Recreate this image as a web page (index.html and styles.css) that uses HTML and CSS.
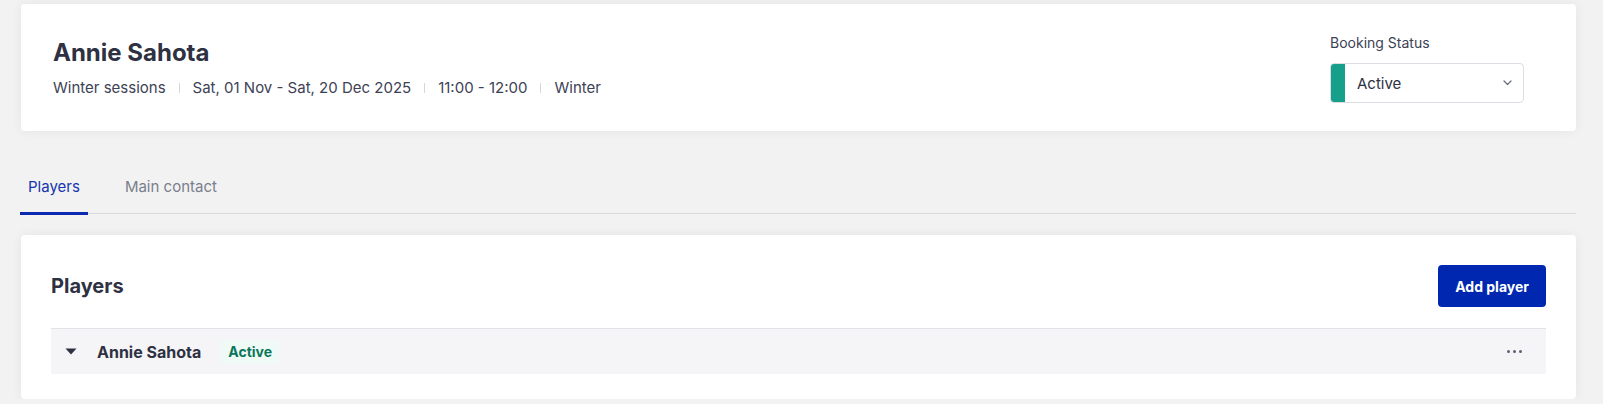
FILE: index.html
```html
<!DOCTYPE html>
<html lang="en">
<head>
<meta charset="utf-8">
<title>Booking</title>
<link rel="stylesheet" href="styles.css">
</head>
<body>
<div class="page">
  <section class="card header-card">
    <div class="header-info">
      <h1 class="title">Annie Sahota</h1>
      <div class="meta">
        <span class="meta-item">Winter sessions</span>
        <span class="sep"></span>
        <span class="meta-item">Sat, 01 Nov - Sat, 20 Dec 2025</span>
        <span class="sep"></span>
        <span class="meta-item">11:00 - 12:00</span>
        <span class="sep"></span>
        <span class="meta-item">Winter</span>
      </div>
    </div>
    <div class="status">
      <div class="status-label">Booking Status</div>
      <div class="select">
        <span class="select-strip"></span>
        <span class="select-value">Active</span>
        <svg class="chevron" width="9" height="6" viewBox="0 0 9 6"><path d="M1 1l3.5 3.5L8 1" fill="none" stroke="#6b7080" stroke-width="1.3" stroke-linecap="round" stroke-linejoin="round"/></svg>
      </div>
    </div>
  </section>

  <nav class="tabs">
    <span class="tab tab-active">Players</span>
    <span class="tab">Main contact</span>
  </nav>

  <section class="card players-card">
    <div class="players-head">
      <h2 class="players-title">Players</h2>
      <button class="btn-primary">Add player</button>
    </div>
    <div class="player-row">
      <svg class="caret" width="12" height="7" viewBox="0 0 12 7"><path d="M0.5 0.5h11L6 6.5z" fill="#2d3142"/></svg>
      <span class="player-name">Annie Sahota</span>
      <span class="badge">Active</span>
      <span class="spacer"></span>
      <span class="dots"><i></i><i></i><i></i></span>
    </div>
  </section>
</div>
</body>
</html>
```

FILE: styles.css
```css
* { box-sizing: border-box; }
html, body { margin: 0; padding: 0; }
body {
  background: #f2f2f2;
  font-family: Inter, "Noto Sans", sans-serif;
  color: #2d3142;
}
.page {
  padding: 4px 27px 0 20px;
}
.card {
  background: #ffffff;
  border-radius: 4px;
  box-shadow: 0 0 12px rgba(0, 0, 0, 0.06);
}
.header-card {
  height: 127px;
  display: flex;
  align-items: center;
  justify-content: space-between;
  padding: 0 52px 0 32px;
  margin-left: 1px;
}
.title {
  margin: 0 0 9px 0;
  font-size: 24px;
  line-height: 32px;
  font-weight: 700;
  color: #2d3142;
}
.meta {
  display: flex;
  align-items: center;
  font-size: 15px;
  line-height: 20px;
  color: #3d4255;
}
.sep {
  width: 1px;
  height: 10px;
  background: #d4d6dc;
  margin: 0 13px;
}
.status {
  display: flex;
  flex-direction: column;
}
.status-label {
  font-size: 14px;
  line-height: 20px;
  color: #3d4255;
  margin-top: 1px;
  margin-bottom: 10px;
}
.select {
  width: 194px;
  height: 40px;
  border: 1px solid #dcdde2;
  border-radius: 4px;
  display: flex;
  align-items: center;
  overflow: hidden;
}
.select-strip {
  width: 15px;
  align-self: stretch;
  margin: -1px 0 -1px -1px;
  background: #16a08b;
  border-radius: 4px 0 0 4px;
}
.select-value {
  flex: 1;
  padding-left: 12px;
  font-size: 15px;
  color: #2d3142;
}
.chevron {
  margin-right: 11px;
}
.tabs {
  display: flex;
  margin-top: 34px;
  border-bottom: 1px solid #d9dadd;
}
.tab {
  padding: 12px 8px 15px;
  margin-right: 29px;
  margin-bottom: -2px;
  font-size: 15px;
  line-height: 20px;
  color: #7a7e8c;
  border-bottom: 3px solid transparent;
}
.tab-active {
  color: #1434b0;
  border-bottom-color: #0a28b0;
}
.players-card {
  margin-top: 21px;
  margin-left: 1px;
  padding: 30px 30px 25px 30px;
}
.players-head {
  display: flex;
  align-items: center;
  justify-content: space-between;
  margin-bottom: 21px;
}
.players-title {
  margin: 0;
  font-size: 20px;
  line-height: 28px;
  font-weight: 700;
  color: #2d3142;
}
.btn-primary {
  height: 42px;
  padding: 0 17px;
  border: none;
  border-radius: 4px;
  background: #0027b0;
  color: #ffffff;
  font-family: Inter, "Noto Sans", sans-serif;
  font-size: 14px;
  font-weight: 700;
}
.player-row {
  height: 46px;
  display: flex;
  align-items: center;
  background: #f5f5f7;
  border-top: 1px solid #e2e3e9;
  padding: 0 24px 0 14px;
}
.caret {
  margin-right: 20px;
}
.player-name {
  font-size: 16px;
  font-weight: 700;
  color: #2d3142;
  margin-right: 20px;
}
.badge {
  height: 24px;
  display: flex;
  align-items: center;
  padding: 0 7px;
  border-radius: 4px;
  background: #effaf7;
  color: #0b7559;
  font-size: 14px;
  font-weight: 700;
}
.spacer { flex: 1; }
.dots {
  display: flex;
  gap: 3px;
}
.dots i {
  width: 3px;
  height: 3px;
  border-radius: 50%;
  background: #5c6070;
}
```
